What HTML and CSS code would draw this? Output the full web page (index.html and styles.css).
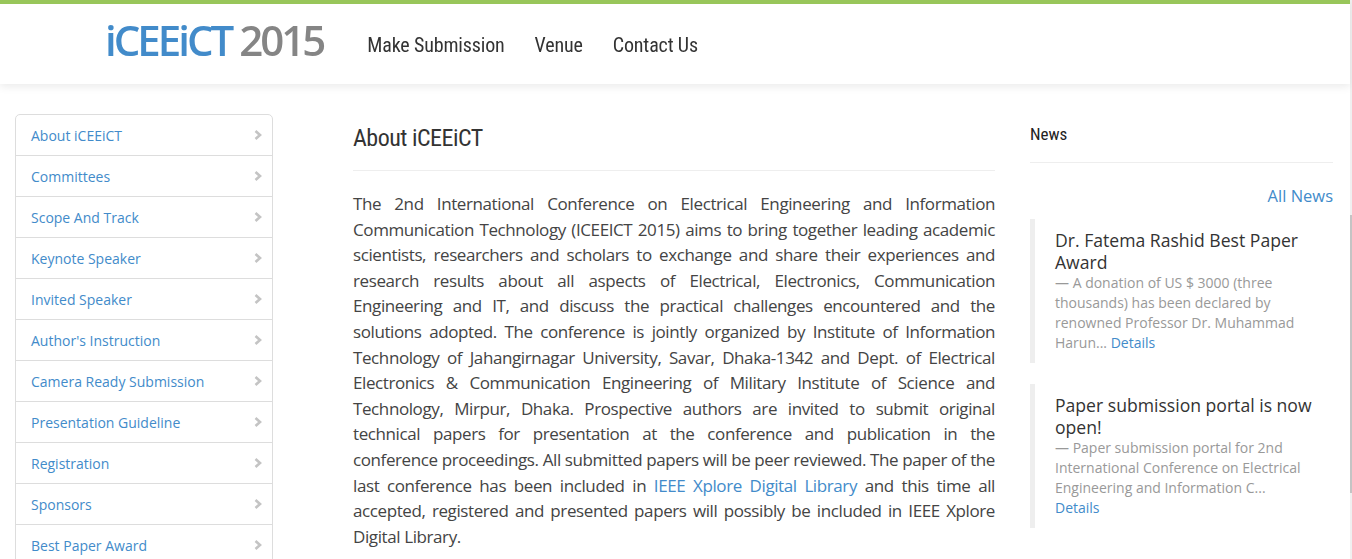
FILE: index.html
```html
<!DOCTYPE html>
<html>
<head>
<meta charset="utf-8">
<link rel="stylesheet" href="styles.css">
</head>
<body>
<header class="topbar">
  <div class="topbar-inner">
    <a class="logo" href="#"><span class="logo-blue">iCEEiCT</span> <span class="logo-gray">2015</span></a>
    <nav class="mainnav">
      <a href="#">Make Submission</a>
      <a href="#">Venue</a>
      <a href="#">Contact Us</a>
    </nav>
  </div>
</header>
<div class="page">
  <aside class="sidebar">
    <ul class="list-group">
      <li><a href="#">About iCEEiCT</a><svg class="chev" viewBox="0 0 8 10" width="8" height="10"><polyline points="1.5,1 6,5 1.5,9" /></svg></li>
      <li><a href="#">Committees</a><svg class="chev" viewBox="0 0 8 10" width="8" height="10"><polyline points="1.5,1 6,5 1.5,9" /></svg></li>
      <li><a href="#">Scope And Track</a><svg class="chev" viewBox="0 0 8 10" width="8" height="10"><polyline points="1.5,1 6,5 1.5,9" /></svg></li>
      <li><a href="#">Keynote Speaker</a><svg class="chev" viewBox="0 0 8 10" width="8" height="10"><polyline points="1.5,1 6,5 1.5,9" /></svg></li>
      <li><a href="#">Invited Speaker</a><svg class="chev" viewBox="0 0 8 10" width="8" height="10"><polyline points="1.5,1 6,5 1.5,9" /></svg></li>
      <li><a href="#">Author's Instruction</a><svg class="chev" viewBox="0 0 8 10" width="8" height="10"><polyline points="1.5,1 6,5 1.5,9" /></svg></li>
      <li><a href="#">Camera Ready Submission</a><svg class="chev" viewBox="0 0 8 10" width="8" height="10"><polyline points="1.5,1 6,5 1.5,9" /></svg></li>
      <li><a href="#">Presentation Guideline</a><svg class="chev" viewBox="0 0 8 10" width="8" height="10"><polyline points="1.5,1 6,5 1.5,9" /></svg></li>
      <li><a href="#">Registration</a><svg class="chev" viewBox="0 0 8 10" width="8" height="10"><polyline points="1.5,1 6,5 1.5,9" /></svg></li>
      <li><a href="#">Sponsors</a><svg class="chev" viewBox="0 0 8 10" width="8" height="10"><polyline points="1.5,1 6,5 1.5,9" /></svg></li>
      <li><a href="#">Best Paper Award</a><svg class="chev" viewBox="0 0 8 10" width="8" height="10"><polyline points="1.5,1 6,5 1.5,9" /></svg></li>
    </ul>
  </aside>
  <main class="content">
    <h1 class="page-title">About iCEEiCT</h1>
    <p class="about">The 2nd International Conference on Electrical Engineering and Information Communication Technology (ICEEICT 2015) aims to bring together leading academic scientists, researchers and scholars to exchange and share their experiences and research results about all aspects of Electrical, Electronics, Communication Engineering and IT, and discuss the practical challenges encountered and the solutions adopted. The conference is jointly organized by Institute of Information Technology of Jahangirnagar University, Savar, Dhaka-1342 and Dept. of Electrical Electronics &amp; Communication Engineering of Military Institute of Science and Technology, Mirpur, Dhaka. Prospective authors are invited to submit original technical papers for presentation at the conference and publication in the conference proceedings. All submitted papers will be peer reviewed. The paper of the last conference has been included in <a href="#">IEEE Xplore Digital Library</a> and this time all accepted, registered and presented papers will possibly be included in IEEE Xplore Digital Library.</p>
  </main>
  <aside class="news">
    <h2 class="news-title">News</h2>
    <div class="all-news"><a href="#">All News</a></div>
    <blockquote class="news-item">
      <h3>Dr. Fatema Rashid Best Paper Award</h3>
      <p>— A donation of US $ 3000 (three thousands) has been declared by renowned Professor Dr. Muhammad Harun... <a href="#">Details</a></p>
    </blockquote>
    <blockquote class="news-item">
      <h3>Paper submission portal is now open!</h3>
      <p>— Paper submission portal for 2nd International Conference on Electrical Engineering and Information C...<br><a href="#">Details</a></p>
    </blockquote>
  </aside>
</div>
<div class="scrolltrack"><div class="scrollthumb"></div></div>
</body>
</html>
```

FILE: styles.css
```css
* { box-sizing: border-box; }
html, body { margin: 0; padding: 0; }
body {
  font-family: "Open Sans", "Noto Sans", sans-serif;
  color: #333;
  background: #fff;
  width: 1352px;
  overflow: hidden;
}
a { text-decoration: none; color: #428bca; }

.topbar {
  border-top: 4px solid #98c65a;
  height: 84px;
  background: #fff;
  box-shadow: 0 3px 8px rgba(0,0,0,0.08);
  position: relative;
  z-index: 1;
  width: 1350px;
}
.topbar-inner {
  display: flex;
  align-items: center;
  height: 80px;
  padding-left: 105px;
}
.logo {
  font-family: "Open Sans", sans-serif;
  font-weight: 600;
  font-size: 42px;
  letter-spacing: -3px;
  line-height: 1;
  margin-top: -8px;
  white-space: nowrap;
}
.logo-blue { color: #428bca; }
.logo-gray { color: #858585; }
.mainnav {
  display: flex;
  gap: 30px;
  margin-left: 44px;
  margin-top: 2px;
}
.mainnav a {
  font-family: Roboto, sans-serif;
  font-stretch: condensed;
  font-size: 20px;
  color: #333;
  letter-spacing: -0.15px;
}

.page {
  display: flex;
  align-items: flex-start;
  padding-left: 15px;
  padding-top: 30px;
}
.sidebar { flex: 0 0 258px; }
.content { flex: 0 0 642px; margin-left: 80px; }
.news { flex: 0 0 303px; margin-left: 35px; }

.list-group {
  list-style: none;
  margin: 0;
  padding: 0;
  border: 1px solid #ddd;
  border-radius: 5px;
}
.list-group li {
  display: flex;
  align-items: center;
  justify-content: space-between;
  height: 41px;
  padding: 0 10px 0 15px;
  border-top: 1px solid #ddd;
}
.list-group li:first-child { border-top: none; height: 40px; }
.list-group a {
  font-size: 14px;
  color: #428bca;
}
.chev {
  fill: none;
  stroke: #c4c4c4;
  stroke-width: 2.6;
  margin-top: -1px;
}

.page-title {
  font-family: Roboto, sans-serif;
  font-stretch: condensed;
  font-weight: 400;
  font-size: 24px;
  letter-spacing: -0.5px;
  color: #333;
  margin: 10px 0 0;
  line-height: 28px;
  padding-bottom: 18px;
  border-bottom: 1px solid #eee;
}
.about {
  font-family: "Open Sans", sans-serif;
  font-size: 17px;
  letter-spacing: -0.4px;
  line-height: 25.6px;
  text-align: justify;
  color: #444;
  margin: 20px 0 0;
}

.news-title {
  font-family: Roboto, sans-serif;
  font-stretch: condensed;
  font-weight: 400;
  font-size: 17px;
  color: #222;
  margin: 10px 0 0;
  line-height: 20px;
  padding-bottom: 18px;
  border-bottom: 1px solid #eee;
}
.all-news {
  text-align: right;
  margin-top: 22px;
  font-size: 16.5px;
  line-height: 22px;
}
.news-item {
  margin: 12px 0 21px;
  border-left: 5px solid #eee;
  padding: 10px 0 10px 20px;
}
.news-item h3 {
  font-size: 17.6px;
  font-weight: 400;
  line-height: 22px;
  margin: 0;
  color: #333;
}
.news-item p {
  font-size: 14px;
  line-height: 20px;
  color: #999;
  margin: 0;
}
.news-item + .news-item { margin-top: 0; }

.scrolltrack {
  position: fixed;
  top: 0;
  right: 0;
  width: 2px;
  height: 559px;
  background: #f0f0f0;
}
.scrollthumb {
  margin-top: 215px;
  height: 278px;
  background: #c4c4c4;
}
```
